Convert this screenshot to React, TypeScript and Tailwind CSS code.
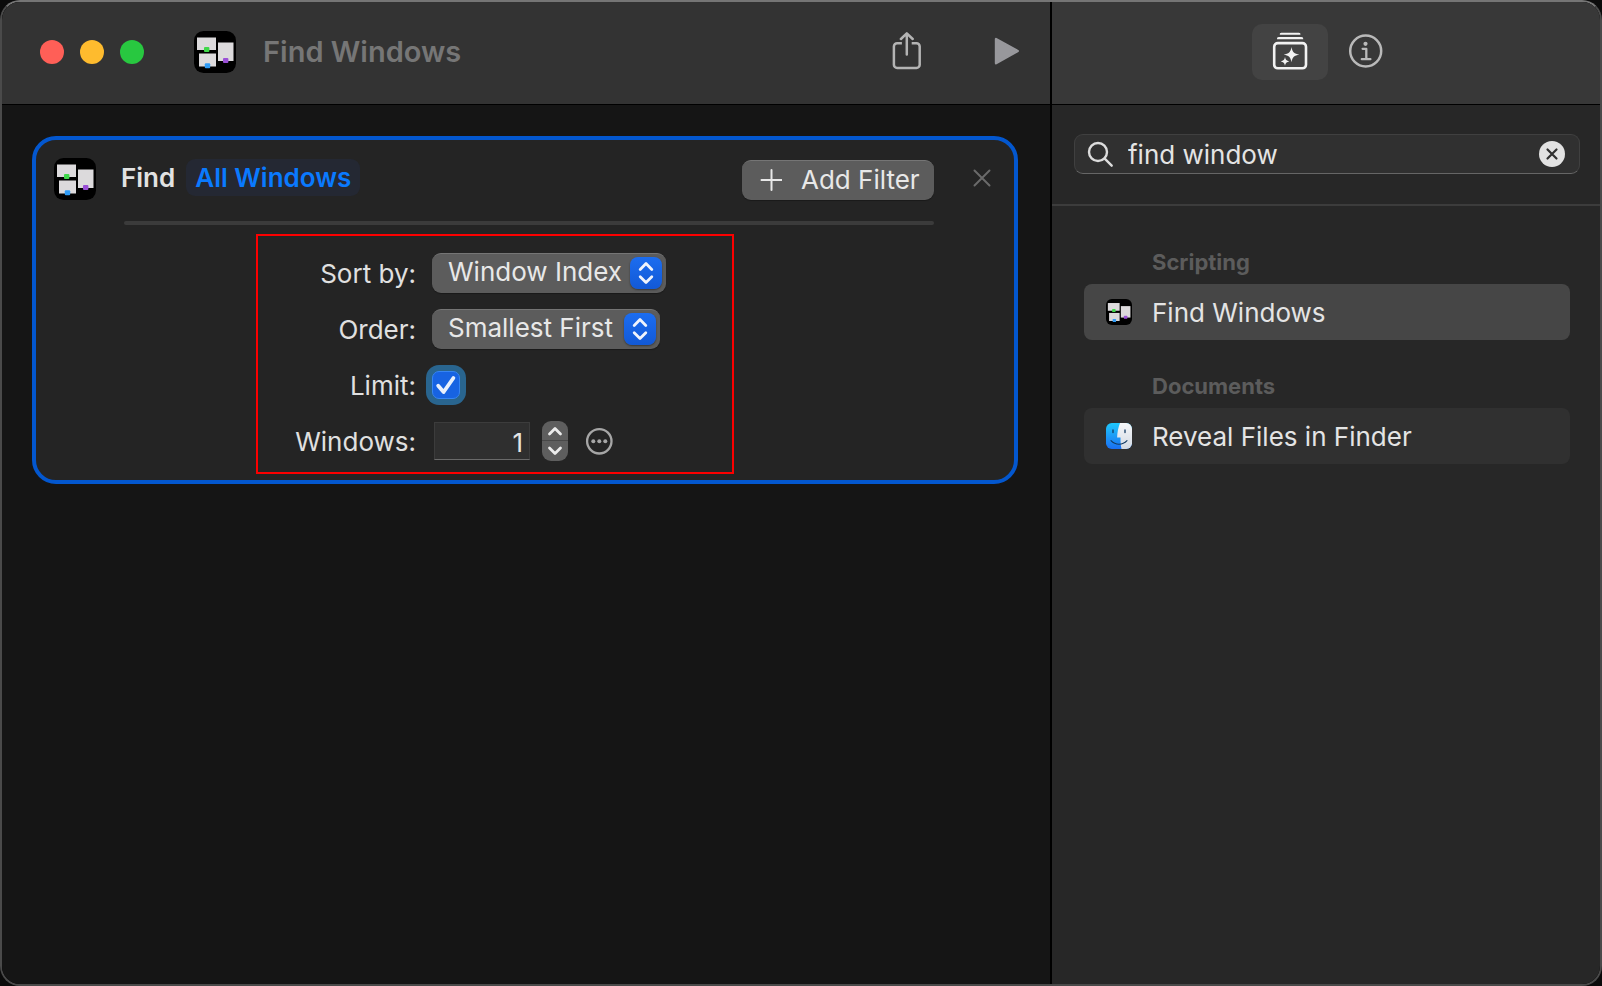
import type { ReactNode } from "react";

function WindowsAppIcon({ className }: { className: string }) {
  return (
    <svg viewBox="0 0 42 42" className={className} aria-hidden="true">
      <rect width="42" height="42" rx="9.5" fill="#000" />
      <rect x="3" y="6.5" width="19" height="12.5" fill="#dcdadc" />
      <rect x="5" y="22.5" width="17" height="13" fill="#dcdadc" />
      <rect x="24" y="11.5" width="15.5" height="18.5" fill="#dcdadc" />
      <rect x="10" y="16" width="5.4" height="5" rx="1" fill="#3fd84a" />
      <rect x="10.8" y="32.2" width="5.4" height="5" rx="1" fill="#2f9bf5" />
      <rect x="29" y="27" width="5.4" height="5" rx="1" fill="#9a4fd6" />
    </svg>
  );
}

function FinderIcon() {
  return (
    <svg viewBox="0 0 26 26" className="size-[26px] shrink-0" aria-hidden="true">
      <defs>
        <linearGradient id="finderBlue" x1="0" y1="0" x2="0" y2="1">
          <stop offset="0" stopColor="#1fc8fb" />
          <stop offset="1" stopColor="#1a6ff2" />
        </linearGradient>
        <linearGradient id="finderWhite" x1="0" y1="0" x2="0" y2="1">
          <stop offset="0" stopColor="#f6f7f9" />
          <stop offset="1" stopColor="#d3dae4" />
        </linearGradient>
        <clipPath id="finderClip">
          <rect width="26" height="26" rx="5.8" />
        </clipPath>
      </defs>
      <g clipPath="url(#finderClip)">
        <rect width="26" height="26" fill="url(#finderBlue)" />
        <path d="M14 0C12.2 4.4 11.3 9.4 11.1 14.6h3.4c-.1 4.2.2 8.2 1 11.4H26V0z" fill="url(#finderWhite)" />
      </g>
      <path d="M7 7v2.6M19 7v2.6" stroke="#123a63" strokeWidth="1.3" strokeLinecap="round" />
      <path d="M5 17.600c4.600 4.800 11.400 4.800 16 0" fill="none" stroke="#123a63" strokeWidth="1.100" strokeLinecap="round" />
    </svg>
  );
}

function PopUp({ id, value, options, className }: { id: string; value: string; options: string[]; className: string }) {
  return (
    <div className={`relative h-10 ${className}`}>
      <select
        id={id}
        defaultValue={value}
        className="h-10 w-full appearance-none rounded-[9px] border-t border-[#757575] bg-[#5c5c5c] pb-1 pl-4 pr-10 text-[26px] leading-8 text-[#e8e8e8] shadow-[0_1px_1px_rgba(0,0,0,0.3)]"
      >
        {options.map((o) => (
          <option key={o}>{o}</option>
        ))}
      </select>
      <span className="pointer-events-none absolute right-1 top-1 size-8 rounded-[8px] bg-gradient-to-b from-[#1c6df0] to-[#1259d6] shadow-[0_1px_2px_rgba(0,0,0,0.4)]">
        <svg viewBox="0 0 32 32" className="size-8" fill="none" stroke="#f0f4fc" strokeWidth="2.800" strokeLinecap="round" strokeLinejoin="round" aria-hidden="true">
          <path d="M10.200 12.400 16 6.600l5.800 5.800M10.200 19.800 16 25.600l5.800-5.800" />
        </svg>
      </span>
    </div>
  );
}

function Field({ id, label, children }: { id: string; label: string; children: ReactNode }) {
  return (
    <div className="flex h-10 items-center gap-4">
      <label htmlFor={id} className="w-[158px] pt-0.5 text-right text-[26px] leading-8 text-[#e0e0e0]">
        {label}
      </label>
      {children}
    </div>
  );
}

function ResultGroup({ title, name, icon, selected }: { title: string; name: string; icon: ReactNode; selected?: boolean }) {
  return (
    <section>
      <h2 className="pl-[68px] text-[22px] font-bold leading-7 text-[#5c5c5c]">{title}</h2>
      <button
        type="button"
        className={`mt-2 flex h-14 w-full items-center gap-5 rounded-lg pl-[22px] text-left text-[26px] leading-8 text-[#e4e4e4] ${selected ? "bg-[#464646]" : "bg-[#303030]"}`}
      >
        {icon}
        <span className="pt-0.5">{name}</span>
      </button>
    </section>
  );
}

export default function App() {
  return (
    <div className="flex min-h-screen bg-[#0b0b0b] font-['Inter','Liberation_Sans',sans-serif]">
      <div className="flex flex-1 overflow-hidden rounded-[20px] border-2 border-[#4a4a4a] border-t-[#757575] bg-black">
        <main className="flex min-w-0 flex-1 flex-col border-r-2 border-black bg-[#151515]">
          <header className="flex h-[103px] items-center border-b border-black bg-[#333333] pb-0.5 pl-[38px] pr-[30px]">
            <div className="flex gap-4">
              <button type="button" aria-label="Close" className="size-6 rounded-full bg-[#ff5f57]" />
              <button type="button" aria-label="Minimize" className="size-6 rounded-full bg-[#febb2e]" />
              <button type="button" aria-label="Zoom" className="size-6 rounded-full bg-[#28c840]" />
            </div>
            <WindowsAppIcon className="ml-[50px] size-[42px]" />
            <h1 className="ml-[27px] flex-1 text-[29px] font-semibold leading-9 text-[#767676]">Find Windows</h1>
            <button type="button" aria-label="Share" className="mr-[72px]">
              <svg viewBox="0 0 32 40" className="h-10 w-8" fill="none" stroke="#b4b4b4" strokeWidth="2.500" strokeLinecap="round" strokeLinejoin="round">
                <path d="M11.900 11.300H7.100a3.200 3.200 0 0 0-3.200 3.200v18.200a3.200 3.200 0 0 0 3.200 3.200h19.400a3.200 3.200 0 0 0 3.200-3.200V14.500a3.200 3.200 0 0 0-3.200-3.200h-4.800" strokeLinecap="butt" />
                <path d="M16.800 22.500V1.600M10.900 7l5.900-5.600L22.700 7" />
              </svg>
            </button>
            <button type="button" aria-label="Run">
              <svg viewBox="0 0 26 32" className="h-8 w-[26px]" fill="#98989c" stroke="#98989c" strokeWidth="2.400" strokeLinejoin="round">
                <path d="M2 3v24.200L23.800 15z" />
              </svg>
            </button>
          </header>

          <section className="ml-[30px] mr-8 mt-[31px] rounded-[24px] border-4 border-[#0357cf] bg-[#242424] pb-[6px]">
            <div className="flex h-[81px] items-start pl-[18px] pr-[22px] pt-[18px]">
              <WindowsAppIcon className="size-[42px]" />
              <span className="ml-[25px] mt-px text-[26px] font-semibold leading-[37px] text-[#e2e2e2]">Find</span>
              <button type="button" className="ml-[11px] mt-px h-[37px] rounded-[9px] bg-[#242833] px-[9px] text-[26px] font-semibold leading-[37px] text-[#0a7aff]">
                All Windows
              </button>
              <button
                type="button"
                className="ml-auto mt-0.5 flex h-10 w-48 items-center gap-[19px] rounded-[9px] border-t border-[#757575] bg-[#5c5c5c] pb-0.5 pl-[18px] text-[26px] leading-8 text-[#e8e8e8] shadow-[0_1px_1px_rgba(0,0,0,0.3)]"
              >
                <svg viewBox="0 0 22 22" className="size-[22px] shrink-0" stroke="#e8e8e8" strokeWidth="2" strokeLinecap="round" aria-hidden="true">
                  <path d="M11.500 1v20M1.500 11h20" />
                </svg>
                <span className="whitespace-nowrap">Add Filter</span>
              </button>
              <button type="button" aria-label="Remove action" className="ml-[38px] mt-[10px]">
                <svg viewBox="0 0 20 20" className="size-5" stroke="#6a6a6a" strokeWidth="2" strokeLinecap="round">
                  <path d="M2.500 2.500l15 15M17.500 2.500l-15 15" />
                </svg>
              </button>
            </div>
            <hr className="ml-[88px] mr-20 h-1 rounded-full border-0 bg-[#3b3b3b]" />
            <form className="ml-[220px] mt-[9px] flex w-[478px] flex-col gap-4 border-2 border-[#fc0000] pb-[11px] pt-[17px]">
              <Field id="sort" label="Sort by:">
                <PopUp id="sort" value="Window Index" options={["Window Index", "Title", "Width", "Height"]} className="w-[234px]" />
              </Field>
              <Field id="order" label="Order:">
                <PopUp id="order" value="Smallest First" options={["Smallest First", "Biggest First"]} className="w-[228px]" />
              </Field>
              <Field id="limit" label="Limit:">
                <span className="grid size-7">
                  <input
                    id="limit"
                    type="checkbox"
                    defaultChecked
                    className="col-start-1 row-start-1 size-7 appearance-none rounded-[7px] border border-[#3585f3] bg-[#1763e2] shadow-[0_0_0_6px_#29658f]"
                  />
                  <svg viewBox="0 0 28 28" className="pointer-events-none z-10 col-start-1 row-start-1 size-7" fill="none" stroke="#e8f0fc" strokeWidth="3.800" strokeLinecap="round" strokeLinejoin="round" aria-hidden="true">
                    <path d="M6.200 14.800l5.400 6.200L21.400 7" />
                  </svg>
                </span>
              </Field>
              <Field id="count" label="Windows:">
                <div className="flex items-center">
                  <input
                    id="count"
                    type="text"
                    inputMode="numeric"
                    defaultValue="1"
                    className="ml-0.5 h-[38px] w-24 border border-[#3c3c3c] border-b-[#6a6a6a] bg-[#2f2f2f] pr-[6px] pt-0.5 text-right text-[26px] leading-8 text-[#e4e4e4]"
                  />
                  <div className="ml-3 flex h-10 w-[26px] flex-col overflow-hidden rounded-[9px] bg-[#5e5e5e]">
                    <button type="button" aria-label="Increase" className="flex h-5 items-center justify-center border-b border-[#484848]">
                      <svg viewBox="0 0 18 12" className="h-3 w-[18px]" fill="none" stroke="#ececec" strokeWidth="2.800" strokeLinecap="round" strokeLinejoin="round">
                        <path d="M3.500 9 9 3.500 14.500 9" />
                      </svg>
                    </button>
                    <button type="button" aria-label="Decrease" className="flex h-5 items-center justify-center">
                      <svg viewBox="0 0 18 12" className="h-3 w-[18px]" fill="none" stroke="#ececec" strokeWidth="2.800" strokeLinecap="round" strokeLinejoin="round">
                        <path d="M3.500 3 9 8.500 14.500 3" />
                      </svg>
                    </button>
                  </div>
                  <button type="button" aria-label="More options" className="ml-[17px]">
                    <svg viewBox="0 0 28 28" className="size-7" fill="#a6a6a6">
                      <circle cx="14.300" cy="14.300" r="12.200" fill="none" stroke="#a6a6a6" strokeWidth="2.300" />
                      <circle cx="8.300" cy="14.300" r="2" />
                      <circle cx="14.300" cy="14.300" r="2" />
                      <circle cx="20.300" cy="14.300" r="2" />
                    </svg>
                  </button>
                </div>
              </Field>
            </form>
          </section>
        </main>

        <aside className="flex w-[548px] shrink-0 flex-col bg-[#272727]">
          <header className="flex h-[103px] items-center border-b border-black bg-[#383838] pb-0.5 pl-[200px]">
            <button type="button" aria-label="Action library" className="flex h-14 w-[76px] items-center justify-center rounded-[10px] bg-[#434343]">
              <svg viewBox="0 0 36 40" className="h-10 w-9">
                <path d="M9.300.700h17.600a1.600 1.600 0 0 1 1.500 2H7.800a1.600 1.600 0 0 1 1.500-2zM6.800 5.100h22.600a2 2 0 0 1 1.900 2.200H4.900a2 2 0 0 1 1.900-2.200z" fill="#f2f2f2" />
                <rect x="2.200" y="11.100" width="31.800" height="25.200" rx="3.600" fill="none" stroke="#f2f2f2" strokeWidth="2.600" />
                <path d="M19.500 14.900c.9 5 2.700 6.800 7.900 7.700-5.200.9-7 2.700-7.900 7.700-.9-5-2.700-6.800-7.900-7.700 5.200-.9 7-2.700 7.900-7.700zM13 25.100c.5 2.800 1.500 3.800 4.300 4.300-2.800.5-3.800 1.500-4.300 4.300-.5-2.800-1.500-3.800-4.300-4.300 2.800-.5 3.800-1.500 4.300-4.300z" fill="#f2f2f2" />
              </svg>
            </button>
            <button type="button" aria-label="Details" className="ml-5">
              <svg viewBox="0 0 36 36" className="size-9" fill="none" stroke="#b9b9b9">
                <circle cx="17.700" cy="17" r="15.500" strokeWidth="2.500" />
                <circle cx="17.500" cy="9.800" r="2.100" fill="#b9b9b9" stroke="none" />
                <path d="M14.600 14.800h3.700v10M13.800 25.200h8.600" strokeWidth="2.300" strokeLinecap="round" strokeLinejoin="round" />
              </svg>
            </button>
          </header>

          <div className="border-b-2 border-[#3c3c3c] pb-[30px] pl-[22px] pr-5 pt-[29px]">
            <div className="flex h-10 items-center rounded-[9px] border border-[#404040] border-b-[#666666] bg-[#303030] pl-3 pr-[14px]">
              <svg viewBox="0 0 28 28" className="size-7 shrink-0" fill="none" stroke="#dcdcdc" strokeWidth="2.400" strokeLinecap="round" aria-hidden="true">
                <circle cx="11" cy="12" r="9" />
                <path d="M17.700 18.700l7 7" />
              </svg>
              <input
                type="text"
                aria-label="Search actions"
                defaultValue="find window"
                className="ml-[13px] h-9 min-w-0 flex-1 bg-transparent text-[26px] leading-8 text-[#e4e4e4] outline-none"
              />
              <button type="button" aria-label="Clear search">
                <svg viewBox="0 0 26 26" className="size-[26px]">
                  <circle cx="13" cy="13" r="13" fill="#e2e2e2" />
                  <path d="M8.500 8.500l9 9M17.500 8.500l-9 9" stroke="#303030" strokeWidth="2.200" strokeLinecap="round" />
                </svg>
              </button>
            </div>
          </div>

          <div className="flex flex-col gap-8 pl-8 pr-[30px] pt-[42px]">
            <ResultGroup title="Scripting" name="Find Windows" icon={<WindowsAppIcon className="size-[26px] shrink-0" />} selected />
            <ResultGroup title="Documents" name="Reveal Files in Finder" icon={<FinderIcon />} />
          </div>
        </aside>
      </div>
    </div>
  );
}
